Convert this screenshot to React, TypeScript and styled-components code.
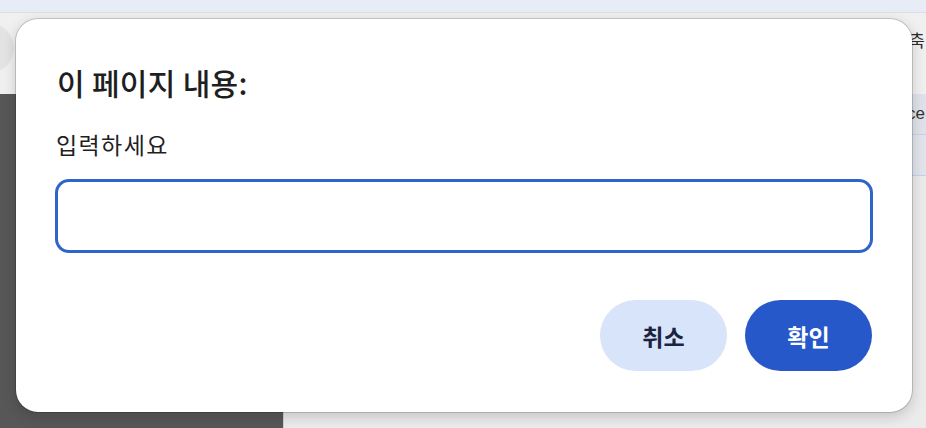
import React from 'react';
import styled, { createGlobalStyle } from 'styled-components';

const GlobalStyle = createGlobalStyle`
  html, body {
    margin: 0;
    padding: 0;
    width: 926px;
    height: 428px;
    overflow: hidden;
    font-family: "Noto Sans CJK KR", "Noto Sans", sans-serif;
  }
  * { box-sizing: border-box; }
`;

const Page = styled.div`
  position: relative;
  width: 926px;
  height: 428px;
  overflow: hidden;
  display: flex;
  flex-direction: column;
  background: #ececec;
`;

const TabStrip = styled.div`
  height: 13px;
  background: #e7ecf6;
  border-bottom: 1px solid #dcdfe6;
`;

const Toolbar = styled.div`
  height: 81px;
  background: #f0f0f0;
  display: flex;
  align-items: center;
  justify-content: space-between;
  overflow: hidden;
`;

const AvatarCircle = styled.div`
  width: 50px;
  height: 50px;
  margin-left: -36px;
  margin-top: -12px;
  border-radius: 50%;
  background: #e3e3e3;
`;

const ToolbarText = styled.span`
  margin-right: 1px;
  margin-top: -28px;
  font-size: 17px;
  color: #2a2a2a;
  white-space: nowrap;
`;

const Body = styled.div`
  flex: 1;
  display: flex;
`;

const Sidebar = styled.div`
  width: 283px;
  background: #575757;
`;

const Main = styled.div`
  flex: 1;
  display: flex;
  flex-direction: column;
  border-left: 1px solid #c9d1df;
  background: #ebebeb;
`;

const TableRow = styled.div<{ $shade: string }>`
  height: 41px;
  display: flex;
  align-items: center;
  justify-content: flex-end;
  background: ${p => p.$shade};
  border-bottom: 1px solid #c4d2ef;
  overflow: hidden;
`;

const CellText = styled.span`
  margin-right: 1px;
  font-family: "Liberation Sans", sans-serif;
  font-size: 17px;
  color: #333;
`;

const Dialog = styled.div`
  position: absolute;
  left: 16px;
  top: 19px;
  width: 896px;
  height: 393px;
  background: #ffffff;
  border-radius: 22px;
  box-shadow: 0 0 0 1px rgba(0, 0, 0, 0.16), 0 4px 14px rgba(0, 0, 0, 0.18);
  padding: 45px 39px 41px;
  display: flex;
  flex-direction: column;
`;

const Title = styled.h1`
  margin: 0 0 29px 2px;
  font-size: 30px;
  line-height: 36px;
  font-weight: 500;
  letter-spacing: 0.3px;
  color: #1f1f1f;
`;

const Label = styled.label`
  margin: 0 0 20px 1px;
  font-size: 23px;
  line-height: 30px;
  font-weight: 400;
  letter-spacing: 1.4px;
  color: #1f1f1f;
`;

const Input = styled.input`
  height: 74px;
  width: 100%;
  border: 3px solid #2f65cb;
  border-radius: 14px;
  outline: none;
  padding: 0 16px;
  font-size: 20px;
  font-family: inherit;
  background: #fff;
`;

const Actions = styled.div`
  margin-top: 47px;
  display: flex;
  justify-content: flex-end;
  gap: 18px;
  padding-right: 1px;
`;

const Button = styled.button<{ $primary?: boolean }>`
  width: 127px;
  height: 71px;
  border: none;
  border-radius: 36px;
  font-family: inherit;
  font-size: 23px;
  font-weight: 700;
  background: ${p => (p.$primary ? '#2758c9' : '#d8e4f9')};
  color: ${p => (p.$primary ? '#ffffff' : '#1a2340')};
  cursor: pointer;
`;

export default function App() {
  return (
    <>
      <GlobalStyle />
      <Page>
        <TabStrip />
        <Toolbar>
          <AvatarCircle />
          <ToolbarText>단축</ToolbarText>
        </Toolbar>
        <Body>
          <Sidebar />
          <Main>
            <TableRow $shade="#dfe2ea">
              <CellText>Service</CellText>
            </TableRow>
            <TableRow $shade="#e1e4eb" />
          </Main>
        </Body>
        <Dialog role="dialog">
          <Title>이 페이지 내용:</Title>
          <Label htmlFor="prompt">입력하세요</Label>
          <Input id="prompt" type="text" />
          <Actions>
            <Button>취소</Button>
            <Button $primary>확인</Button>
          </Actions>
        </Dialog>
      </Page>
    </>
  );
}
